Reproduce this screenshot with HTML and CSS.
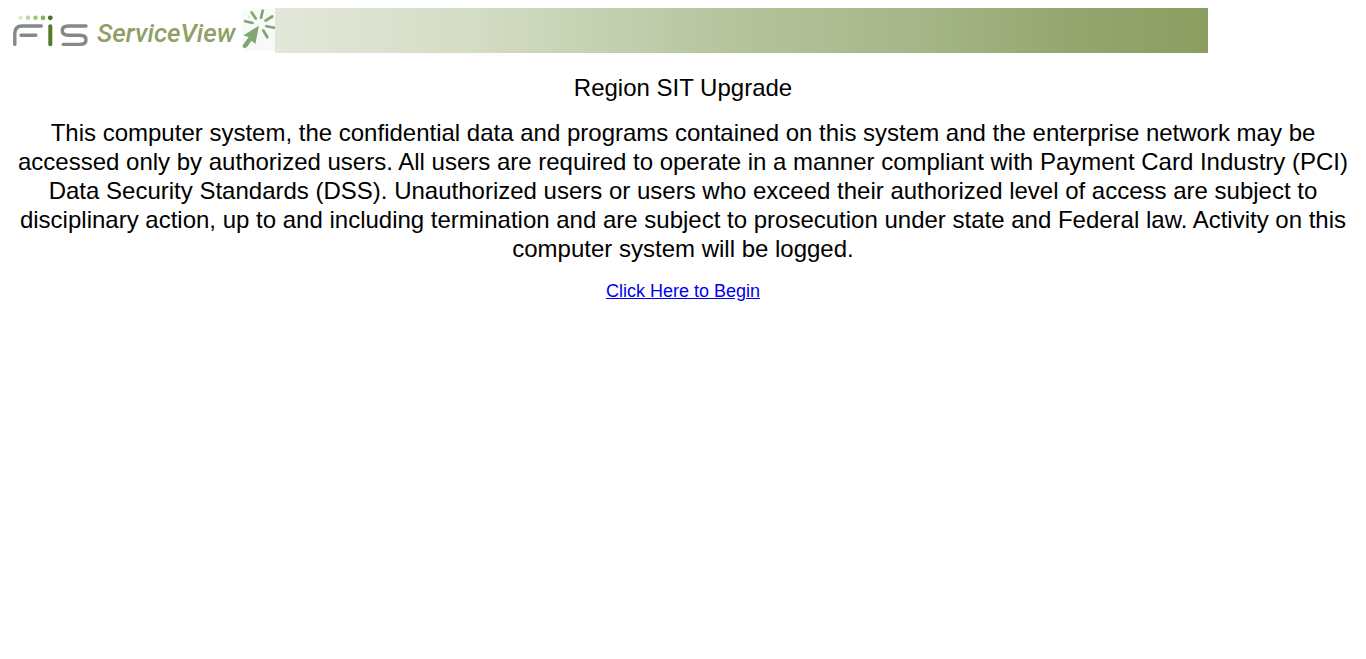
FILE: index.html
```html
<!DOCTYPE html>
<html lang="en">
<head>
<meta charset="utf-8">
<meta name="viewport" content="width=device-width, initial-scale=1">
<title>FIS ServiceView</title>
<link rel="stylesheet" href="styles.css">
</head>
<body>
<header class="banner">
  <svg class="logo" width="86" height="45" viewBox="0 0 86 45" role="img" aria-label="FIS">
    <g fill="none" stroke="#858789" stroke-width="3.4" stroke-linecap="round" stroke-linejoin="round">
      <path d="M6.8 36.4V25.5Q6.8 18 14.3 18H33.3M13 27.2H27.8"/>
      <path d="M78 18H60.3Q54.2 18 54.2 22.6T60.3 27.2H72Q78 27.2 78 31.8T72 36.4H55.3"/>
    </g>
    <path d="M42.3 18.3V36.2" fill="none" stroke="#54792b" stroke-width="4" stroke-linecap="round"/>
    <circle cx="12.6" cy="9.8" r="2.1" fill="#d9e9c5"/>
    <circle cx="20" cy="9.8" r="2.2" fill="#b7d79b"/>
    <circle cx="27.5" cy="9.8" r="2.3" fill="#9aca72"/>
    <circle cx="35" cy="9.8" r="2.4" fill="#83b94c"/>
    <circle cx="42.3" cy="9.8" r="2.4" fill="#486d27"/>
  </svg>
  <span class="product">ServiceView</span>
  <svg class="pointer" width="33" height="45" viewBox="0 0 33 45" aria-hidden="true">
    <rect y="1" width="33" height="42" fill="#f7faf7"/>
    <path d="M17 17.7 1.5 27.2 6.6 29.2 1.2 36.4Q-.1 38.6 1.6 39.8 3.8 40.6 5.4 38.6L9.6 32.8 13.4 36Z" fill="#7fa673"/>
    <g fill="none" stroke="#7fa673" stroke-width="2.7" stroke-linecap="round">
      <path d="M3.2 13.2 10.5 15M9.7 4.4 13.7 10.5M20.7 2.5 19.1 9.7M30.2 8.5 23.6 12.6M24.4 18.2 32.2 19.8M21.3 22.5 25.4 29.2"/>
    </g>
    <circle cx="7" cy="9" r=".8" fill="#b9d1b5"/>
  </svg>
  <div class="band"></div>
</header>
<main class="notice">
  <p>Region SIT Upgrade</p>
  <p>This computer system, the confidential data and programs contained on this system and the enterprise network may be accessed only by authorized users. All users are required to operate in a manner compliant with Payment Card Industry (PCI) Data Security Standards (DSS). Unauthorized users or users who exceed their authorized level of access are subject to disciplinary action, up to and including termination and are subject to prosecution under state and Federal law. Activity on this computer system will be logged.</p>
  <p class="begin"><a href="#begin">Click Here to Begin</a></p>
</main>
</body>
</html>
```

FILE: styles.css
```css
body {
  margin: 8px;
  background: #fff;
  color: #000;
  font-family: "Liberation Sans", Arial, sans-serif;
}

.banner {
  display: flex;
  max-width: 1200px;
  height: 45px;
}

.logo,
.pointer {
  flex: none;
}

.product {
  flex: none;
  width: 148px;
  padding-left: 3px;
  box-sizing: border-box;
  color: #8fa066;
  font: italic 500 26px/51px Roboto, "Liberation Sans", sans-serif;
}

.band {
  flex: 1;
  background: linear-gradient(to right, #e3e7da 0%, #d3dcc4 22%, #b7c49e 48%, #a3b484 72%, #94a56e 86%, #8b9e61 100%);
}

.notice {
  padding-top: 20px;
  font-size: 24px;
  line-height: 29px;
  text-align: center;
}

.notice p {
  margin: 0 0 16px;
}

.notice .begin {
  font-size: 18px;
  line-height: 25px;
}

.begin a {
  color: #00e;
  text-decoration: underline;
}
```
